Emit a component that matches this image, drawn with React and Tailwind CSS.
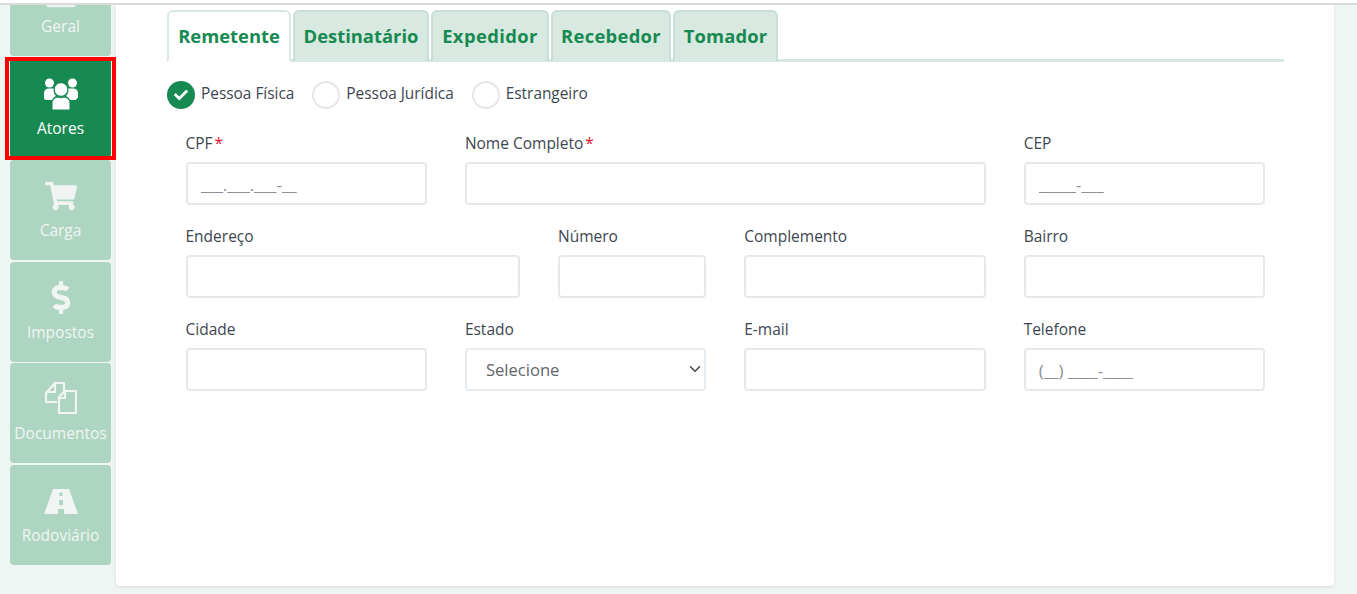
import React from "react";
import { FaShoppingCart, FaDollarSign, FaCheck, FaListAlt } from "react-icons/fa";
import { ChevronDown } from "lucide-react";

function UsersIcon() {
  return (
    <svg viewBox="0 0 36 33" className="w-[36px] h-[33px]" fill="currentColor">
      <circle cx="6.500" cy="5" r="4.500" />
      <circle cx="29.500" cy="5" r="4.500" />
      <path d="M1 20v-5c0-3 2-4.500 5-4.500h5c-1 3 0 5.500 2 7.500-2 1-3 2-4 4H3c-1 0-2-1-2-2z" />
      <path d="M35 20v-5c0-3-2-4.500-5-4.500h-5c1 3 0 5.500-2 7.500 2 1 3 2 4 4h5c1 0 2-1 2-2z" />
      <circle cx="18" cy="11.500" r="6.800" stroke="#178a52" strokeWidth="1" />
      <path d="M10.500 32c-.8 0-1.500-.7-1.500-1.500V25.500c0-3.500 2.500-6 6-6.500 2 1 4 1 6 0 3.500.5 6 3 6 6.500v5c0 .8-.7 1.500-1.500 1.500z" stroke="#178a52" strokeWidth="1" />
    </svg>
  );
}

function DocsIcon() {
  return (
    <svg viewBox="0 0 33 33" className="w-[33px] h-[33px] -mt-[3px]" fill="none" stroke="currentColor" strokeWidth="2.2" strokeLinejoin="round">
      <path d="M13 21H2V12L11 2h9v8" />
      <path d="M11 2v9H2" />
      <path d="M15 32V16l6-6h11v22z" />
      <path d="M21 10v7h-6" />
    </svg>
  );
}

function RoadIcon() {
  return (
    <svg viewBox="0 0 34 25" className="w-[34px] h-[25px]" fill="currentColor" fillRule="evenodd">
      <path d="M9 0H25L34 25H20V20H14V25H0Z M15.500 3.500V7H18.500V3.500Z M15 11V16H19V11Z" />
    </svg>
  );
}

const navItems = [
  { label: "Geral", icon: <FaListAlt className="w-[30px] h-[30px] mt-[3px]" /> },
  { label: "Atores", icon: <UsersIcon />, active: true },
  { label: "Carga", icon: <FaShoppingCart className="w-[32px] h-[30px]" /> },
  { label: "Impostos", icon: <FaDollarSign className="w-[22px] h-[33px]" /> },
  { label: "Documentos", icon: <DocsIcon /> },
  { label: "Rodoviário", icon: <RoadIcon /> },
];

const tabs = [
  { label: "Remetente", width: "w-[124px]", spacing: "" },
  { label: "Destinatário", width: "w-[136px]", spacing: "" },
  { label: "Expedidor", width: "w-[118px]", spacing: "tracking-[0.4px]" },
  { label: "Recebedor", width: "w-[120px]", spacing: "tracking-[0.3px]" },
  { label: "Tomador", width: "w-[105px]", spacing: "tracking-[0.15px]" },
];

const inputClass =
  "w-full h-[43px] px-[13px] pt-[2px] bg-white border-2 border-[#e6e9e8] rounded text-[17px] text-[#4b5563] placeholder:text-[#8a8f94] focus:outline-none";

function Field({ label, required, span, mask, select }) {
  return (
    <div className={span}>
      <label className="block h-[24px] leading-[24px] text-[15.5px] text-[#3d4650]">
        {label}
        {required && <span className="text-[#e0102a] ml-[2px]">*</span>}
      </label>
      <div className="mt-[7px]">
        {select ? (
          <div className="relative">
            <select className="w-full h-[43px] pl-[19px] pr-8 pt-[1px] bg-white border-2 border-[#e6ebf0] rounded text-[16.6px] text-[#5f666d] appearance-none focus:outline-none">
              <option>Selecione</option>
            </select>
            <ChevronDown className="absolute right-[2px] top-[12px] w-[18px] h-[18px] text-[#3d4650]" strokeWidth={2} />
          </div>
        ) : (
          <input type="text" placeholder={mask} className={inputClass} />
        )}
      </div>
    </div>
  );
}

function Radio({ label, checked }) {
  return (
    <label className="flex items-center gap-[6px] text-[15.4px] text-[#3d4650]">
      {checked ? (
        <span className="w-[28px] h-[28px] rounded-full bg-[#178a52] flex items-center justify-center text-white">
          <FaCheck className="w-[14px] h-[14px]" />
        </span>
      ) : (
        <span className="w-[28px] h-[28px] rounded-full bg-white border-2 border-[#e4e7e6]" />
      )}
      <span className="-mt-[3px]">{label}</span>
    </label>
  );
}

export default function App() {
  return (
    <div className="w-[1357px] h-[594px] overflow-hidden bg-[#eff5f3] font-['Open_Sans','Noto_Sans',sans-serif]">
      {/* Top line */}
      <div className="relative z-10 h-[5px] bg-white border-b-2 border-[#d9dbda]" />

      <div className="flex h-[589px]">
        {/* Side nav */}
        <nav className="w-[116px] shrink-0 pl-[10px] pr-[5px] -mt-[48.75px] flex flex-col gap-[1.75px]">
          {navItems.map((item) => (
            <div
              key={item.label}
              className={`relative h-[100px] w-[101px] shrink-0 rounded flex flex-col items-center pt-[18px] ${
                item.active ? "bg-[#178a52] text-white" : "bg-[#aed5c2] text-[#f0f5f3]"
              }`}
            >
              <div className="h-[36px] flex items-center justify-center">{item.icon}</div>
              <span className="mt-[6px] text-[15.5px] leading-[20px]">{item.label}</span>
              {item.active && <div className="absolute -left-[5px] -right-[5px] -top-[1px] -bottom-[2px] border-[4px] border-[#ff0000]" />}
            </div>
          ))}
        </nav>

        {/* Card */}
        <main className="w-[1218px] h-[581px] bg-white rounded-b shadow-[0_1px_3px_rgba(0,0,0,0.1)] pl-[51px] pt-[5px]">
          {/* Tabs */}
          <div className="w-[1117px] h-[52px] flex gap-[2px] border-b-[3px] border-[#d7e8e0]">
            {tabs.map((tab, i) => (
              <div
                key={tab.label}
                className={`h-[52px] rounded-t-md border-2 text-center text-[18.4px] leading-[48px] font-bold text-[#178a52] ${tab.width} ${tab.spacing} ${
                  i === 0 ? "bg-white border-[#d7e8e0] border-b-white" : "bg-[#d7e9e0] border-[#c9dfd5] border-b-[#d7e9e0]"
                }`}
              >
                {tab.label}
              </div>
            ))}
          </div>

          {/* Tipo de pessoa */}
          <div className="flex gap-[18px] mt-[19px]">
            <Radio label="Pessoa Física" checked />
            <Radio label="Pessoa Jurídica" />
            <Radio label="Estrangeiro" />
          </div>

          {/* Form */}
          <div className="w-[1079.5px] ml-[18.5px] mt-[22px] grid grid-cols-12 gap-x-[38px] gap-y-[19px]">
            <Field label="CPF" required span="col-span-3" mask="___.___.___-__" />
            <Field label="Nome Completo" required span="col-span-6" />
            <Field label="CEP" span="col-span-3" mask="_____-___" />
            <Field label="Endereço" span="col-span-4" />
            <Field label="Número" span="col-span-2" />
            <Field label="Complemento" span="col-span-3" />
            <Field label="Bairro" span="col-span-3" />
            <Field label="Cidade" span="col-span-3" />
            <Field label="Estado" span="col-span-3" select />
            <Field label="E-mail" span="col-span-3" />
            <Field label="Telefone" span="col-span-3" mask="(__) ____-____" />
          </div>
        </main>
      </div>
    </div>
  );
}
